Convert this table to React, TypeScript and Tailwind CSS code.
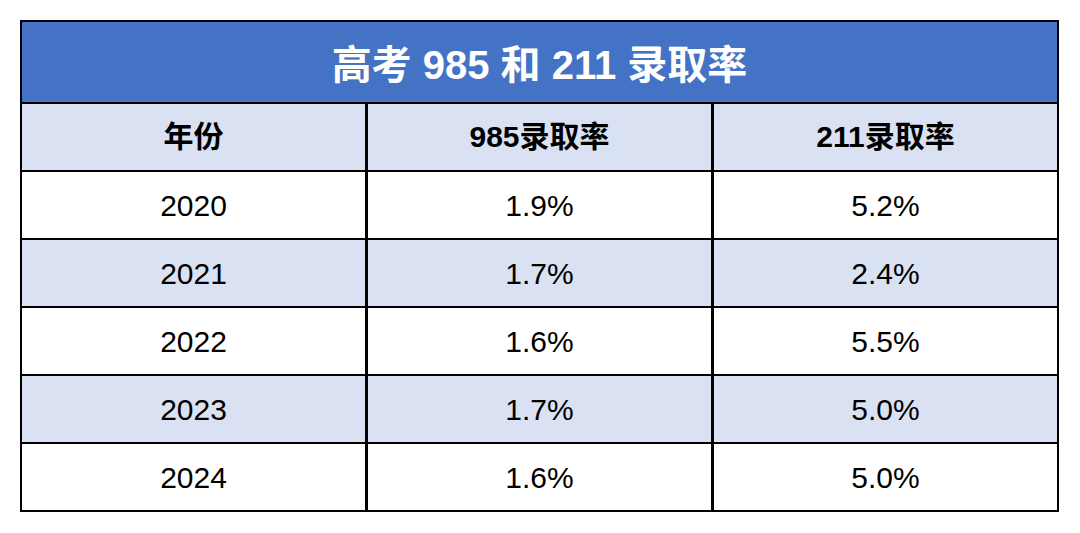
import React from "react";

const rows = [
  ["2020", "1.9%", "5.2%"],
  ["2021", "1.7%", "2.4%"],
  ["2022", "1.6%", "5.5%"],
  ["2023", "1.7%", "5.0%"],
  ["2024", "1.6%", "5.0%"],
];

const font = { fontFamily: '"Liberation Sans", "Noto Sans CJK SC", sans-serif' };

export default function App() {
  return (
    <div className="w-[1080px] h-[533px] bg-white pt-[20px] pl-[20px]" style={font}>
      <div className="w-[1039px] border-2 border-black">
        <div className="h-[82px] pt-[6px] bg-[#4472C4] flex items-center justify-center text-white font-bold text-[40px] leading-none border-b-2 border-black">
          高考 985 和 211 录取率
        </div>
        <div className="grid grid-cols-[343px_3px_343px_3px_343px] h-[68px] bg-[#D9E1F2] border-b-2 border-black">
          <div className="flex items-center justify-center text-[30px] font-bold text-black leading-none">年份</div>
          <div className="bg-black" />
          <div className="flex items-center justify-center text-[30px] font-bold text-black leading-none">985录取率</div>
          <div className="bg-black" />
          <div className="flex items-center justify-center text-[30px] font-bold text-black leading-none">211录取率</div>
        </div>
        {rows.map((r, i) => (
          <div
            key={i}
            className={`grid grid-cols-[343px_3px_343px_3px_343px] ${i === rows.length - 1 ? "h-[66px]" : "h-[68px] border-b-2 border-black"} ${i % 2 === 1 ? "bg-[#D9E1F2]" : "bg-white"}`}
          >
            <div className="flex items-center justify-center text-[30px] text-black leading-none pt-[2px]">{r[0]}</div>
            <div className="bg-black" />
            <div className="flex items-center justify-center text-[30px] text-black leading-none pt-[2px]">{r[1]}</div>
            <div className="bg-black" />
            <div className="flex items-center justify-center text-[30px] text-black leading-none pt-[2px]">{r[2]}</div>
          </div>
        ))}
      </div>
    </div>
  );
}
